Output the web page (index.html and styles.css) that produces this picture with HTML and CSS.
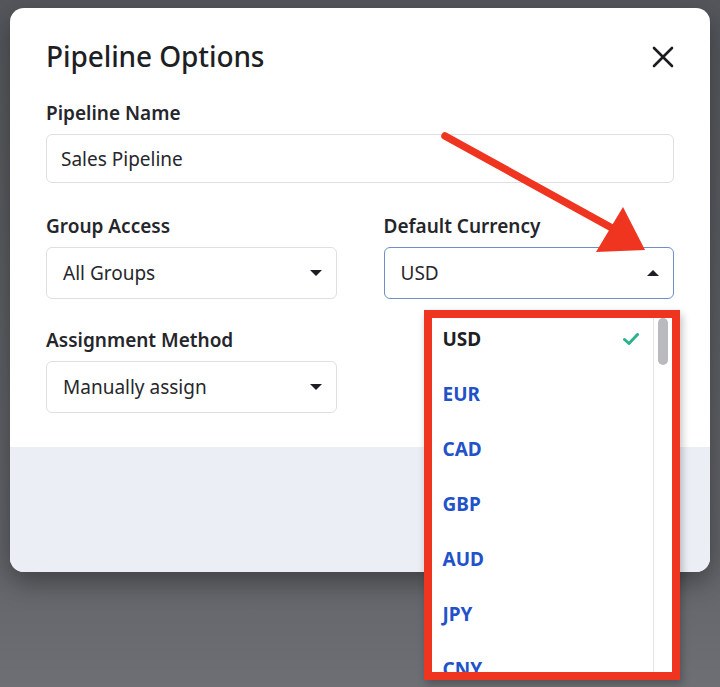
FILE: index.html
```html
<!DOCTYPE html>
<html>
<head>
<meta charset="utf-8">
<link rel="stylesheet" href="styles.css">
</head>
<body>
<div class="modal">
  <div class="modal-body">
    <div class="header">
      <h1 class="title">Pipeline Options</h1>
      <svg class="close" width="22" height="22" viewBox="0 0 22 22"><path d="M2 2 L20 20 M20 2 L2 20" stroke="#1c1c20" stroke-width="2.6" stroke-linecap="round"/></svg>
    </div>
    <div class="field">
      <div class="label">Pipeline Name</div>
      <div class="input">Sales Pipeline</div>
    </div>
    <div class="grid">
      <div class="field">
        <div class="label">Group Access</div>
        <div class="input select">All Groups<span class="caret down"></span></div>
      </div>
      <div class="field currency">
        <div class="label">Default Currency</div>
        <div class="input select open">USD<span class="caret up"></span></div>
        <div class="menu">
          <ul class="options">
            <li class="option selected">USD
              <svg class="check" width="16" height="12" viewBox="0 0 16 12"><path d="M1.5 6.5 L6 10.5 L14.5 1.5" fill="none" stroke="#2cb38d" stroke-width="3" stroke-linecap="round" stroke-linejoin="round"/></svg>
            </li>
            <li class="option">EUR</li>
            <li class="option">CAD</li>
            <li class="option">GBP</li>
            <li class="option">AUD</li>
            <li class="option">JPY</li>
            <li class="option">CNY</li>
          </ul>
          <div class="scrolltrack"><div class="thumb"></div></div>
        </div>
      </div>
      <div class="field">
        <div class="label">Assignment Method</div>
        <div class="input select">Manually assign<span class="caret down"></span></div>
      </div>
    </div>
  </div>
  <div class="footer"></div>
</div>
<svg class="arrow" width="720" height="687" viewBox="0 0 720 687">
  <line x1="445" y1="136" x2="612" y2="228" stroke="#ef3420" stroke-width="7.5" stroke-linecap="round"/>
  <polygon points="623,207 596,252 645,250" fill="#ef3420"/>
</svg>
</body>
</html>
```
FILE: styles.css
```css
html, body {
  margin: 0;
  padding: 0;
}
body {
  width: 720px;
  height: 687px;
  overflow: hidden;
  background: linear-gradient(#55565b, #626368 80%, #6e6f74);
  font-family: "Noto Sans", "Open Sans", sans-serif;
  color: #1e1f24;
  padding-top: 8px;
  box-sizing: border-box;
}
.modal {
  margin: 0 10px;
  width: 700px;
  height: 564px;
  background: #fff;
  border-radius: 14px;
  box-shadow: 0 10px 26px rgba(0, 0, 0, 0.35);
  display: flex;
  flex-direction: column;
}
.modal-body {
  padding: 0 36px;
  height: 439px;
}
.header {
  display: flex;
  justify-content: space-between;
  align-items: center;
  padding-top: 34px;
  height: 40px;
  margin-bottom: 19px;
}
.title {
  margin: 0;
  font-size: 28px;
  font-weight: 500;
  line-height: 40px;
  letter-spacing: -0.1px;
  position: relative;
  top: -6px;
}
.close {
  margin-right: 0;
  position: relative;
  top: -5px;
}
.field {
  position: relative;
  display: flex;
  flex-direction: column;
}
.label {
  font-size: 19px;
  font-weight: 600;
  line-height: 24px;
  margin-bottom: 9px;
  color: #25262b;
}
.input {
  height: 49px;
  box-sizing: border-box;
  border: 1.5px solid #dedfe2;
  border-radius: 6px;
  padding: 0 14px;
  display: flex;
  align-items: center;
  font-size: 19px;
  color: #26272c;
}
.select {
  justify-content: space-between;
  padding: 0 14px 0 16px;
  height: 52px;
}
.select.open {
  border-color: #6d8fc6;
}
.grid {
  display: grid;
  grid-template-columns: 1fr 1fr;
  column-gap: 47px;
  row-gap: 29px;
  margin-top: 31px;
}
.caret {
  width: 0;
  height: 0;
  border-left: 6px solid transparent;
  border-right: 6px solid transparent;
  margin-right: 0;
}
.caret.down {
  border-top: 6px solid #1e1f24;
}
.caret.up {
  border-bottom: 6px solid #1e1f24;
}
.footer {
  flex: 1;
  background: #eceef6;
  border-radius: 0 0 14px 14px;
}
.menu {
  position: absolute;
  left: 40px;
  top: 96px;
  width: 256px;
  height: 370px;
  box-sizing: border-box;
  border: 8px solid #ef3420;
  background: #fff;
  display: flex;
  overflow: hidden;
  z-index: 2;
  box-shadow: 2px 4px 8px rgba(0, 0, 0, 0.25);
}
.options {
  list-style: none;
  margin: 0;
  padding: 0;
  flex: 1;
}
.option {
  height: 55px;
  box-sizing: border-box;
  padding: 8px 14px 0 11px;
  line-height: 26px;
  font-size: 19px;
  font-weight: 700;
  color: #2252c9;
  display: flex;
  justify-content: space-between;
  align-items: flex-start;
}
.option.selected {
  color: #1e1f24;
}
.check {
  margin-top: 7px;
}
.scrolltrack {
  width: 18px;
  border-left: 1px solid #e4e4e7;
  display: flex;
  justify-content: center;
}
.thumb {
  width: 10px;
  height: 47px;
  border-radius: 5px;
  background: #b9babd;
}
.arrow {
  position: absolute;
  left: 0;
  top: 0;
  z-index: 5;
  pointer-events: none;
}
```
